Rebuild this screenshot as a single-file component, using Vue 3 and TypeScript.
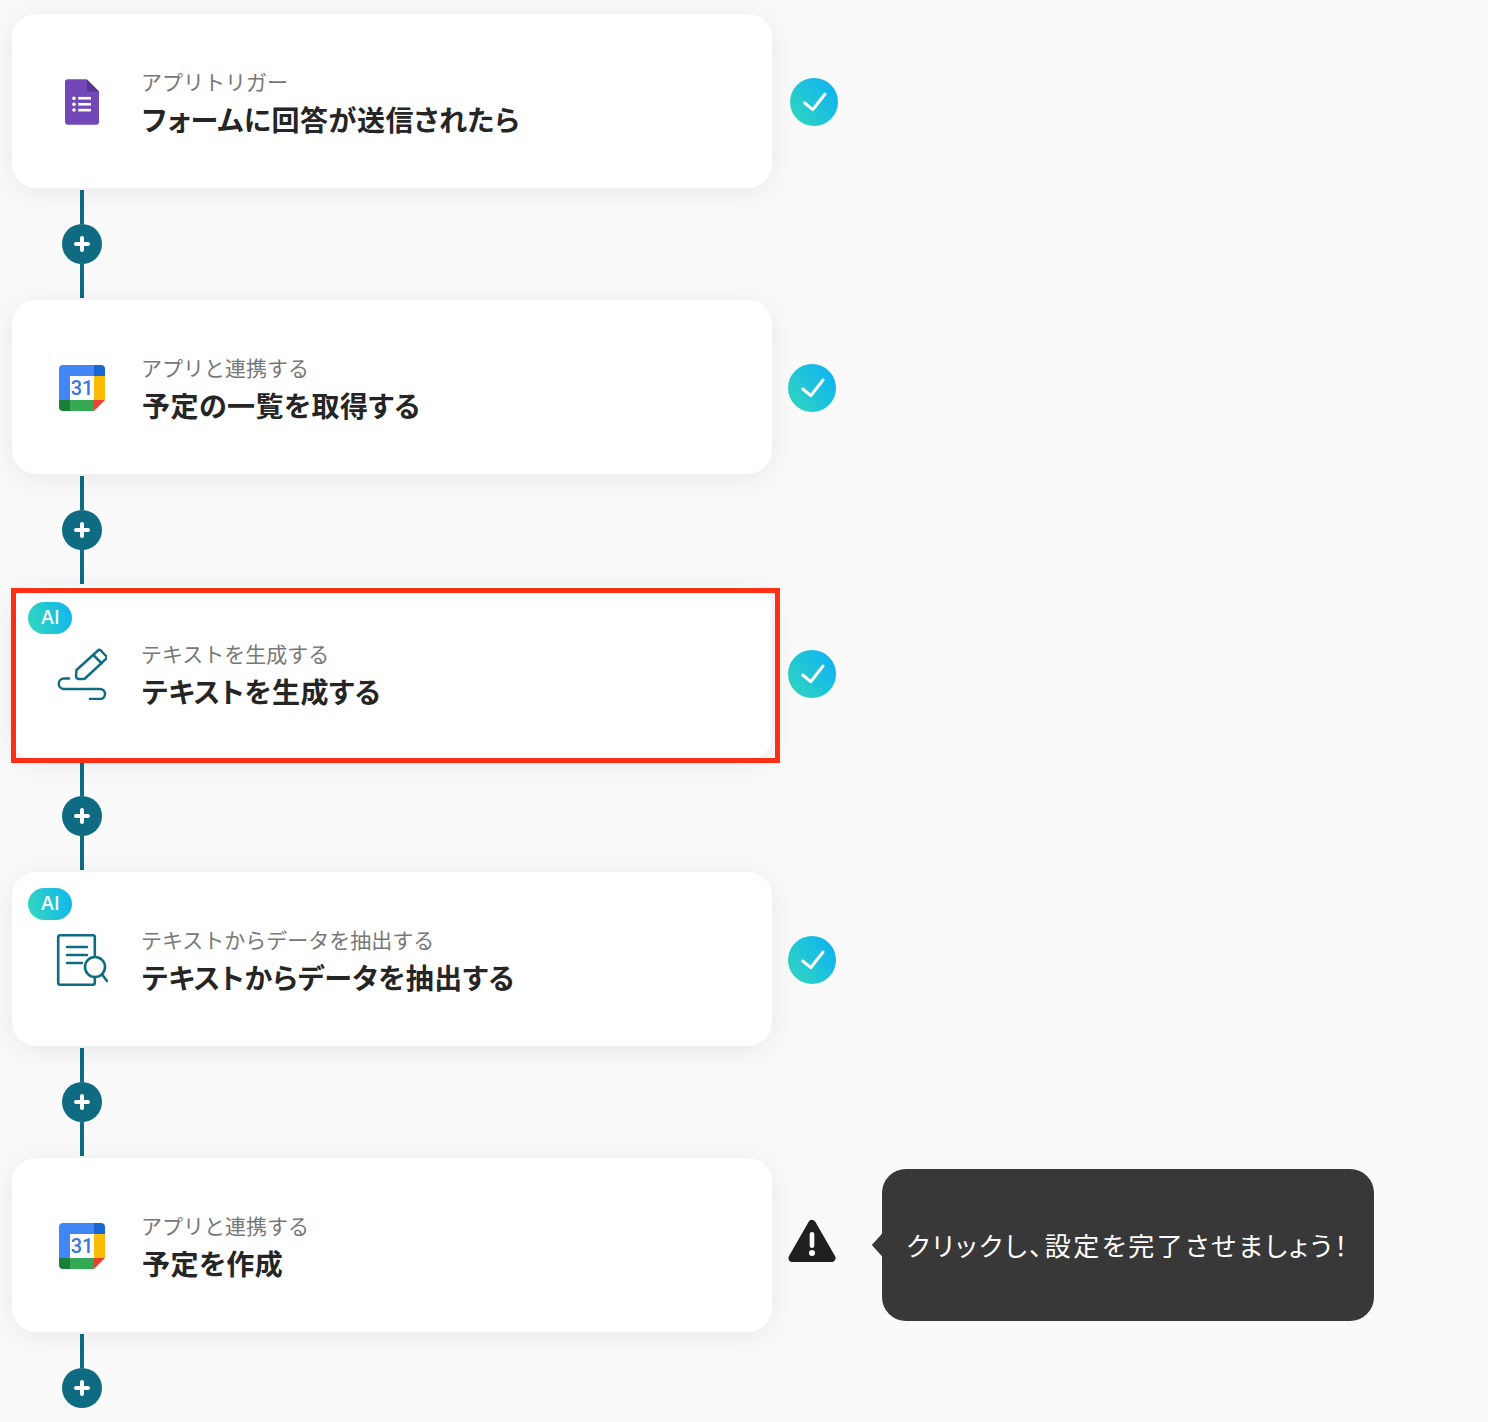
<script setup lang="ts">
// Workflow step list: cards joined by connector lines with "+" buttons.
type Step = {
  id: number;
  icon: "forms" | "calendar" | "pen" | "doc";
  label: string;
  title: string;
  ai?: boolean;
  status: "done" | "warn";
  highlighted?: boolean;
};

const steps: Step[] = [
  { id: 1, icon: "forms", label: "アプリトリガー", title: "フォームに回答が送信されたら", status: "done" },
  { id: 2, icon: "calendar", label: "アプリと連携する", title: "予定の一覧を取得する", status: "done" },
  { id: 3, icon: "pen", label: "テキストを生成する", title: "テキストを生成する", ai: true, status: "done", highlighted: true },
  { id: 4, icon: "doc", label: "テキストからデータを抽出する", title: "テキストからデータを抽出する", ai: true, status: "done" },
  { id: 5, icon: "calendar", label: "アプリと連携する", title: "予定を作成", status: "warn" },
];
</script>

<template>
  <div class="page">
    <svg width="0" height="0" class="defs">
      <defs>
        <linearGradient id="teal" x1="0" y1="1" x2="1" y2="0.35">
          <stop offset="0" stop-color="#33d8bd" />
          <stop offset="1" stop-color="#10b5ef" />
        </linearGradient>
      </defs>
    </svg>

    <template v-for="(step, i) in steps" :key="step.id">
      <div class="row" :class="{ 'row-first': i === 0 }">
        <div class="card">
          <span v-if="step.ai" class="ai">AI</span>

          <div class="icon">
            <svg v-if="step.icon === 'forms'" width="34" height="46" viewBox="0 0 36 48">
              <path d="M3 0H23L36 13V45a3 3 0 0 1-3 3H3a3 3 0 0 1-3-3V3a3 3 0 0 1 3-3Z" fill="#7248b9" />
              <path d="M23 0L36 13H26a3 3 0 0 1-3-3Z" fill="#573691" />
              <g fill="#fff">
                <circle cx="9.5" cy="20" r="1.9" />
                <circle cx="9.5" cy="26.5" r="1.9" />
                <circle cx="9.5" cy="32.5" r="1.9" />
                <rect x="14" y="18.6" width="13.5" height="2.8" />
                <rect x="14" y="25" width="13.5" height="2.8" />
                <rect x="14" y="31.2" width="13.5" height="2.8" />
              </g>
            </svg>

            <svg v-else-if="step.icon === 'calendar'" width="46" height="46" viewBox="0 0 46 46">
              <path d="M11 11H35V35H11Z" fill="#fff" />
              <path d="M35 0H4a4 4 0 0 0-4 4V35H11V11H35Z" fill="#4285f4" />
              <path d="M35 0V11H46V4a4 4 0 0 0-4-4Z" fill="#1967d2" />
              <path d="M35 11H46V35H35Z" fill="#fbbc04" />
              <path d="M0 35V42a4 4 0 0 0 4 4H11V35Z" fill="#188038" />
              <path d="M11 35H35V46H11Z" fill="#34a853" />
              <path d="M35 35V46L46 35Z" fill="#ea4335" />
              <text x="23" y="30" class="cal-num">31</text>
            </svg>

            <svg v-else-if="step.icon === 'pen'" width="50" height="52" viewBox="-1 -1 50 52" fill="none" stroke="#0f6b82" stroke-width="2.5" stroke-linecap="round" stroke-linejoin="round">
              <path d="M18.500 21L40 1.500a2 2 0 0 1 2.800 0L48 7a2 2 0 0 1 0 2.800L27 29.500a2 2 0 0 1-1.400.6H21a3 3 0 0 1-3-3Z" />
              <path d="M35.300 6L43.700 14.300" />
              <path d="M11 29.500H6a5.250 5.250 0 0 0 0 10.500H42a5 5 0 0 1 0 10H32" />
            </svg>

            <svg v-else width="52" height="54" viewBox="0 0 52 54" fill="none" stroke="#0f6b82" stroke-width="2.6" stroke-linecap="round" stroke-linejoin="round">
              <path d="M38.800 22V4.200a2 2 0 0 0-2-2H4.200a2 2 0 0 0-2 2V49.800a2 2 0 0 0 2 2H36.800a2 2 0 0 0 2-2V45" />
              <path d="M11 14H31M11 22H31M11 30H26" />
              <circle cx="39" cy="34" r="10" />
              <path d="M46.500 42L51 48" />
            </svg>
          </div>

          <div class="text">
            <div class="label">{{ step.label }}</div>
            <div class="title">{{ step.title }}</div>
          </div>

          <span v-if="step.highlighted" class="highlight"></span>
        </div>

        <svg v-if="step.status === 'done'" class="status" :class="{ 'status-first': i === 0 }" width="48" height="48" viewBox="0 0 48 48">
          <circle cx="24" cy="24" r="24" fill="url(#teal)" />
          <path d="M14.700 25L22.700 31.700L35 16" fill="none" stroke="#fff" stroke-width="3" stroke-linecap="round" stroke-linejoin="round" />
        </svg>
        <svg v-else class="status warn" width="48" height="44" viewBox="0 0 48 44">
          <path d="M24 5L43.500 39H4.500Z" fill="#202020" stroke="#202020" stroke-width="8" stroke-linejoin="round" />
          <rect x="21.700" y="13" width="4.600" height="16" rx="2.300" fill="#fff" />
          <circle cx="24" cy="34" r="3" fill="#fff" />
        </svg>

        <div v-if="step.status === 'warn'" class="tip">クリックし、設定を完了させましょう！</div>
      </div>

      <div class="connector">
        <span class="line"></span>
        <button class="add" type="button">
          <svg width="16" height="16" viewBox="0 0 16 16">
            <path d="M8 2V14M2 8H14" stroke="#fff" stroke-width="4" stroke-linecap="round" />
          </svg>
        </button>
        <span v-if="i < steps.length - 1" class="line"></span>
      </div>
    </template>
  </div>
</template>

<style>
html,
body {
  background: #fafafa;
}
</style>

<style scoped>
.page {
  height: 1422px;
  overflow: hidden;
  padding: 14px 0 0 12px;
  box-sizing: border-box;
  font-family: "Noto Sans CJK JP", "Noto Sans", sans-serif;
}
.defs {
  position: absolute;
}

.row {
  display: flex;
  align-items: center;
  height: 174px;
}

.card {
  position: relative;
  display: flex;
  align-items: center;
  flex-shrink: 0;
  width: 760px;
  height: 174px;
  padding-left: 46px;
  box-sizing: border-box;
  background: #fff;
  border-radius: 24px;
  box-shadow: 0 4px 30px rgba(0, 0, 0, 0.08);
}

.icon {
  display: flex;
  align-items: center;
  justify-content: center;
  width: 48px;
  margin: 2px 36px 0 0;
}
.icon svg {
  flex-shrink: 0;
}

.text {
  margin-top: 3px;
}
.label {
  margin-left: -1px;
  color: #777;
  font-size: 21px;
  line-height: 30px;
}
.title {
  margin-top: 3px;
  color: #252525;
  font-size: 28px;
  font-weight: 700;
  line-height: 40px;
  letter-spacing: 0.5px;
  font-feature-settings: "palt";
}

.ai {
  position: absolute;
  top: 16px;
  left: 16px;
  width: 44px;
  height: 32px;
  border-radius: 16px;
  background: linear-gradient(75deg, #33d8bd, #10b5ef);
  color: #fff;
  font-family: Inter, sans-serif;
  font-size: 19px;
  font-weight: 500;
  line-height: 32px;
  text-align: center;
}

.highlight {
  position: absolute;
  top: 2px;
  left: -1px;
  right: -8px;
  bottom: -3px;
  border: 5px solid #ff2f16;
}

.status {
  flex-shrink: 0;
  margin: 2px 0 0 16px;
}
.status-first {
  margin-left: 18px;
}
.warn {
  margin-top: -8px;
}

.tip {
  position: relative;
  flex-shrink: 0;
  display: flex;
  align-items: center;
  justify-content: center;
  width: 492px;
  height: 152px;
  margin-left: 46px;
  padding-bottom: 2px;
  box-sizing: border-box;
  border-radius: 24px;
  background: #383838;
  color: #fff;
  font-size: 26px;
  letter-spacing: 2.5px;
  font-feature-settings: "palt";
}
.tip::before {
  content: "";
  position: absolute;
  left: -8px;
  top: 68px;
  width: 16px;
  height: 16px;
  background: #383838;
  transform: scaleX(0.9) rotate(45deg);
}

.connector {
  display: flex;
  flex-direction: column;
  align-items: center;
  width: 40px;
  height: 112px;
  margin-left: 50px;
}
.line {
  flex-shrink: 0;
  width: 4px;
  height: 34px;
  background: #0f6b82;
}
.connector .line:first-child {
  margin-top: 2px;
}
.add {
  display: flex;
  align-items: center;
  justify-content: center;
  flex-shrink: 0;
  width: 40px;
  height: 40px;
  padding: 0;
  border: 0;
  border-radius: 50%;
  background: #0f6b82;
}
.cal-num {
  fill: #3a78d8;
  font-family: "Roboto", sans-serif;
  font-size: 20px;
  font-weight: 500;
  text-anchor: middle;
}
</style>
